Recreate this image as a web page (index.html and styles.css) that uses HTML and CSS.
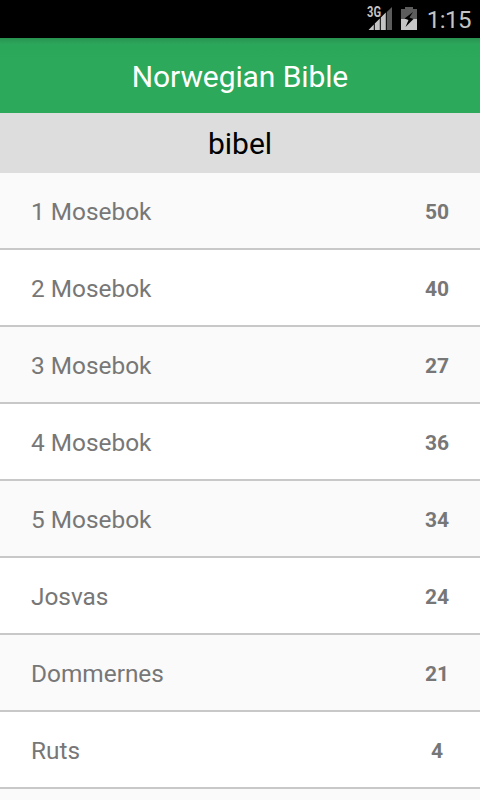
FILE: index.html
```html
<!DOCTYPE html>
<html lang="no">
<head>
    <meta charset="UTF-8">
    <meta name="viewport" content="width=device-width, initial-scale=1.0">
    <title>Norwegian Bible</title>
    <link rel="stylesheet" href="styles.css">
</head>
<body>
    <div class="statusbar">
        <svg class="signal" width="26" height="26" viewBox="0 0 26 26">
            <path fill="#c4c4c4" d="M2.5 25L7.8 19.5V25ZM8.8 18.5L13.8 13.5V25H8.8ZM14.8 12.5L19.8 7.5V25H14.8Z"/>
            <path fill="#5c5c5c" d="M20.8 7L26 2V25H20.8Z"/>
            <text class="network" x="1" y="12" textLength="14" lengthAdjust="spacingAndGlyphs">3G</text>
        </svg>
        <svg class="battery" width="16" height="24" viewBox="0 0 16 24">
            <path fill="#5c5c5c" d="M0 2H4V0H12V2H16V12H0Z"/>
            <path fill="#c4c4c4" d="M0 12H16V23H0Z"/>
            <path fill="#000" d="M12 5L3.5 11.5L7.5 13L4.5 20L12.5 12L8.5 10.5Z"/>
        </svg>
        <span class="clock">1:15</span>
    </div>
    <header>
        <h1>Norwegian Bible</h1>
    </header>
    <h2 class="section">bibel</h2>
    <ul class="books">
        <li><span>1 Mosebok</span><span class="count">50</span></li>
        <li><span>2 Mosebok</span><span class="count">40</span></li>
        <li><span>3 Mosebok</span><span class="count">27</span></li>
        <li><span>4 Mosebok</span><span class="count">36</span></li>
        <li><span>5 Mosebok</span><span class="count">34</span></li>
        <li><span>Josvas</span><span class="count">24</span></li>
        <li><span>Dommernes</span><span class="count">21</span></li>
        <li><span>Ruts</span><span class="count">4</span></li>
    </ul>
</body>
</html>
```

FILE: styles.css
```css
* {
    box-sizing: border-box;
}
body {
    font-family: Roboto, sans-serif;
    margin: 0;
    height: 800px;
    overflow: hidden;
    background-color: #fafafa;
}
.statusbar {
    display: flex;
    justify-content: flex-end;
    height: 38px;
    padding: 5px 9px 0 0;
    background-color: #000;
}
.signal {
    margin-right: 9px;
}
.network {
    font-size: 14px;
    font-weight: bold;
    fill: #c4c4c4;
    stroke: #000;
    stroke-width: 2px;
    paint-order: stroke;
}
.battery {
    margin: 2px 10px 0 0;
}
.clock {
    color: #c4c4c4;
    font-size: 24px;
    letter-spacing: -0.5px;
    line-height: 30px;
}
header {
    height: 75px;
    background: linear-gradient(#289350, #2ba65a 6px, #2ca95a 20px);
}
h1 {
    margin: 0;
    color: #fff;
    font-size: 30px;
    font-weight: normal;
    letter-spacing: -0.1px;
    line-height: 77px;
    text-align: center;
}
.section {
    margin: 0;
    height: 60px;
    background-color: #ddd;
    color: #000;
    font-size: 30px;
    font-weight: normal;
    line-height: 61px;
    text-align: center;
}
.books {
    margin: 0;
    padding: 0;
    list-style: none;
}
.books li {
    display: flex;
    justify-content: space-between;
    height: 77px;
    padding: 0 19px 0 31px;
    border-bottom: 2px solid #c8c8c8;
    color: #777;
    font-size: 24.4px;
    line-height: 77px;
}
.books li:nth-child(odd) {
    background-color: #fafafa;
}
.books li:nth-child(even) {
    background-color: #fff;
}
.count {
    width: 48px;
    font-size: 21px;
    font-weight: bold;
    line-height: 79px;
    text-align: center;
}
```
